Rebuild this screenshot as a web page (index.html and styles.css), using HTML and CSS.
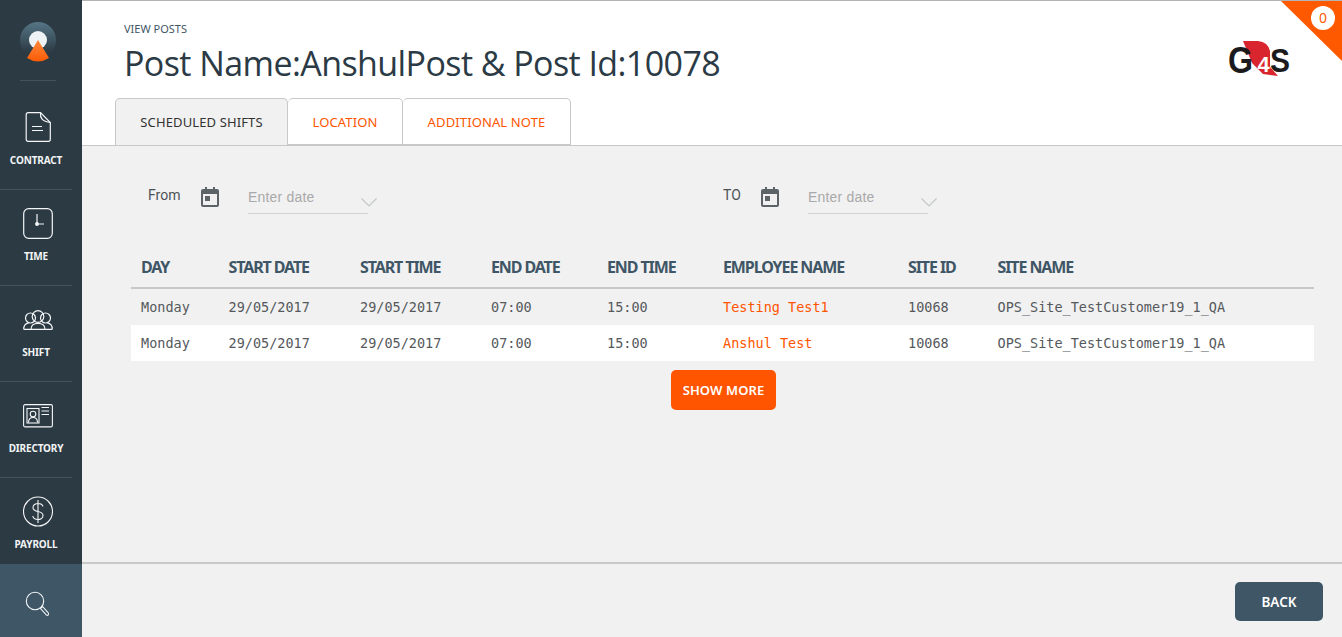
FILE: index.html
```html
<!DOCTYPE html>
<html lang="en">
<head>
<meta charset="utf-8">
<title>View Posts</title>
<link rel="stylesheet" href="styles.css">
</head>
<body>
<div class="app">
  <nav class="sidebar">
    <div class="brand">
      <svg class="brand-mark" width="36" height="42" viewBox="0 0 36 42">
        <defs>
          <linearGradient id="dome" x1="0" y1="0" x2="0" y2="1"><stop offset="0" stop-color="#557586"/><stop offset=".85" stop-color="#2c3a44"/></linearGradient>
          <linearGradient id="cone" x1="0" y1="0" x2="0" y2="1"><stop offset="0" stop-color="#ff8a3a"/><stop offset="1" stop-color="#fb5a05"/></linearGradient>
        </defs>
        <circle cx="18" cy="18" r="18" fill="url(#dome)"/>
        <circle cx="18" cy="18" r="9" fill="#eef2f5"/>
        <path d="M18 18 L29 36 Q18 43 7 36 Z" fill="url(#cone)"/>
      </svg>
    </div>
    <a class="nav-item nav-first">
      <svg width="26" height="30" viewBox="0 0 26 30" fill="none" stroke="#f4f6f7" stroke-width="1.2"><path d="M3 .7H15.5L25.3 10.5V27.5a1.8 1.8 0 0 1-1.8 1.8H3A1.8 1.8 0 0 1 1.2 27.5V2.5A1.8 1.8 0 0 1 3 .7Z"/><path d="M15.5 .7c-.5 5 1.500 9 9.800 9.800" /><path d="M7 14.500H17M7 18.500H18"/></svg>
      <span>CONTRACT</span>
    </a>
    <a class="nav-item">
      <svg width="30" height="31" viewBox="0 0 30 31" fill="none" stroke="#f4f6f7" stroke-width="1.2"><rect x=".7" y=".7" width="28.600" height="29.600" rx="5"/><path d="M14 6V16H21"/><circle cx="14" cy="16" r="1.300" fill="#f4f6f7"/></svg>
      <span>TIME</span>
    </a>
    <a class="nav-item">
      <svg width="30" height="20" viewBox="0 0 30 20" fill="none" stroke="#f4f6f7" stroke-width="1.200"><circle cx="15" cy="6.500" r="5.800"/><circle cx="7.500" cy="8" r="5"/><circle cx="22.500" cy="8" r="5"/><path d="M.7 19.300c0-4 2-6 5-6.500M29.300 19.300c0-4-2-6-5-6.500M8 19.300c0-4 3-6 7-6s7 2 7 6M.7 19.300H29.300"/></svg>
      <span>SHIFT</span>
    </a>
    <a class="nav-item">
      <svg width="30" height="24" viewBox="0 0 30 24" fill="none" stroke="#f4f6f7" stroke-width="1.100"><rect x=".6" y=".6" width="28.800" height="22.300" rx="1.500"/><rect x="4" y="4.500" width="12" height="14.500"/><circle cx="10" cy="10" r="2.800"/><path d="M5.500 18.500c0-3.500 2-5 4.500-5s4.500 1.500 4.500 5M18.500 3.500H26M18.500 7H26M18.500 10.500H26"/></svg>
      <span>DIRECTORY</span>
    </a>
    <a class="nav-item nav-last">
      <svg width="30" height="31" viewBox="0 0 30 31" fill="none" stroke="#f4f6f7" stroke-width="1.100"><circle cx="15" cy="15.500" r="14.500"/><path d="M20 10.500c-.5-2-2.500-3-5-3s-5 1.500-5 4 2.500 3.500 5 4 5 1.500 5 4-2.500 4-5 4-4.800-1.200-5.200-3.500M15 4V27"/></svg>
      <span>PAYROLL</span>
    </a>
    <a class="nav-search">
      <svg width="24" height="26" viewBox="0 0 24 26" fill="none" stroke="#f4f6f7" stroke-width="1.100"><circle cx="10" cy="10" r="8.700"/><path d="M15.500 17.500l2-2 5.800 6.300a1.400 1.400 0 0 1-2 2Z"/></svg>
    </a>
  </nav>

  <div class="main">
    <header class="header">
      <div class="head-row">
        <div class="head-titles">
          <div class="crumb">VIEW POSTS</div>
          <h1 class="title">Post Name:AnshulPost &amp; Post Id:10078</h1>
        </div>
        <svg class="g4s" width="66" height="46" viewBox="0 -4 66 46">
          <path d="M15 0H30Q40 1 42 10L42 26L50 35L35 33L24 22Z" fill="#d9252e"/>
          <text class="g4s-g" x="0" y="32" textLength="25" lengthAdjust="spacingAndGlyphs">G</text>
          <text class="g4s-four" x="29.500" y="31">4</text>
          <text class="g4s-s" x="42" y="31" textLength="20" lengthAdjust="spacingAndGlyphs">S</text>
        </svg>
      </div>
      <div class="tabs">
        <a class="tab tab-active">SCHEDULED SHIFTS</a>
        <a class="tab tab-loc">LOCATION</a>
        <a class="tab tab-note">ADDITIONAL NOTE</a>
      </div>
      <div class="corner"><span class="corner-count">0</span></div>
    </header>

    <section class="content">
      <div class="filters">
        <div class="filter filter-from">
          <span class="filter-label">From</span>
          <svg class="cal" width="18" height="20" viewBox="0 0 18 20"><path d="M4 0H6V2H12V0H14V2H16a2 2 0 0 1 2 2V18a2 2 0 0 1-2 2H2a2 2 0 0 1-2-2V4a2 2 0 0 1 2-2H4ZM2 7V18H16V7Z" fill="#5c6468"/><rect x="4" y="9" width="5" height="5" fill="#5c6468"/></svg>
          <div class="date-input">
            <span class="placeholder">Enter date</span>
            <svg class="chev" width="16" height="9" viewBox="0 0 16 9" fill="none" stroke="#c4c8ca" stroke-width="1.200"><path d="M.5 .5L8 8L15.500 .5"/></svg>
          </div>
        </div>
        <div class="filter filter-to">
          <span class="filter-label">TO</span>
          <svg class="cal" width="18" height="20" viewBox="0 0 18 20"><path d="M4 0H6V2H12V0H14V2H16a2 2 0 0 1 2 2V18a2 2 0 0 1-2 2H2a2 2 0 0 1-2-2V4a2 2 0 0 1 2-2H4ZM2 7V18H16V7Z" fill="#5c6468"/><rect x="4" y="9" width="5" height="5" fill="#5c6468"/></svg>
          <div class="date-input">
            <span class="placeholder">Enter date</span>
            <svg class="chev" width="16" height="9" viewBox="0 0 16 9" fill="none" stroke="#c4c8ca" stroke-width="1.200"><path d="M.5 .5L8 8L15.500 .5"/></svg>
          </div>
        </div>
      </div>

      <table class="shifts">
        <colgroup>
          <col class="c-day"><col class="c-sdate"><col class="c-stime"><col class="c-edate"><col class="c-etime"><col class="c-emp"><col class="c-site"><col>
        </colgroup>
        <thead>
          <tr><th>DAY</th><th>START DATE</th><th>START TIME</th><th>END DATE</th><th>END TIME</th><th>EMPLOYEE NAME</th><th>SITE ID</th><th>SITE NAME</th></tr>
        </thead>
        <tbody>
          <tr><td>Monday</td><td>29/05/2017</td><td>29/05/2017</td><td>07:00</td><td>15:00</td><td class="emp">Testing Test1</td><td>10068</td><td>OPS_Site_TestCustomer19_1_QA</td></tr>
          <tr class="alt"><td>Monday</td><td>29/05/2017</td><td>29/05/2017</td><td>07:00</td><td>15:00</td><td class="emp">Anshul Test</td><td>10068</td><td>OPS_Site_TestCustomer19_1_QA</td></tr>
        </tbody>
      </table>
      <div class="more-row"><button class="btn-more">SHOW MORE</button></div>
    </section>

    <footer class="footer"><button class="btn-back">BACK</button></footer>
  </div>
</div>
</body>
</html>
```
FILE: styles.css
```css
* { box-sizing: border-box; }
html, body { margin: 0; height: 100%; overflow: hidden; }
body { font-family: "Noto Sans", "Open Sans", sans-serif; background: #f1f1f1; color: #2b3a44; }
.app { display: flex; height: 637px; }

.sidebar { width: 82px; flex: none; background: #2c3a44; display: flex; flex-direction: column; }
.brand { height: 81px; margin: 0 26px 0 20px; border-bottom: 1px solid #46525b; padding-top: 22px; flex: none; }
.brand-mark { display: block; }
.nav-item { height: 96px; flex: none; margin-right: 10px; border-bottom: 1px solid #46525b; color: #f2f4f5; font: 700 10px/12px "Noto Sans", sans-serif; letter-spacing: -.15px; position: relative; }
.nav-item svg { position: absolute; top: 18px; left: 23px; }
.nav-item span { position: absolute; top: 60px; left: 0; width: 72px; text-align: center; }
.nav-first { height: 109px; }
.nav-first svg { top: 31px; left: 25px; }
.nav-first span { top: 73px; }
.nav-item:nth-child(4) svg { top: 24px; left: 23px; }
.nav-item:nth-child(5) svg { top: 22px; left: 23px; }
.nav-last { height: 86px; border-bottom: 0; }
.nav-search { height: 73px; flex: none; background: #3f5666; display: flex; align-items: center; justify-content: center; padding: 6px 8px 0 0; }

.main { flex: 1; min-width: 0; display: flex; flex-direction: column; }
.header { height: 146px; flex: none; background: #fff; border-top: 1px solid #b4b4b4; border-bottom: 1px solid #c8c8c8; position: relative; display: flex; flex-direction: column; overflow: hidden; }
.head-row { height: 97px; padding: 21px 48px 0 42px; flex: none; display: flex; justify-content: space-between; align-items: flex-start; }
.crumb { font-size: 11px; line-height: 14px; color: #3f5666; }
.title { margin: 4px 0 0; font: 400 34px/46px "Open Sans", sans-serif; letter-spacing: -.58px; color: #2b3a44; }
.g4s { margin-top: 15px; }
.g4s-g { font: 700 36px "Liberation Sans", sans-serif; fill: #1b1b1d; }
.g4s-s { font: 700 33px "Liberation Sans", sans-serif; fill: #1b1b1d; }
.g4s-four { font: 700 22px "Liberation Sans", sans-serif; fill: #fff; }

.tabs { display: flex; padding-left: 33px; height: 47px; flex: none; }
.tab { height: 47px; border: 1px solid #c8c8c8; border-left: 0; border-radius: 5px 5px 0 0; font-size: 13px; letter-spacing: .12px; line-height: 46px; color: #ff5500; background: #fff; white-space: nowrap; text-align: center; }
.tab-active { width: 173px; background: #f1f1f1; color: #333; border-left: 1px solid #c8c8c8; border-bottom: 0; }
.tab-loc { width: 115px; }
.tab-note { width: 168px; }

.corner { position: absolute; top: 0; right: 0; width: 61px; height: 60px; background: #ff5900; clip-path: polygon(0 0, 100% 0, 100% 100%); }
.corner-count { position: absolute; top: 5px; right: 7px; width: 24px; height: 24px; border-radius: 50%; background: #fff; color: #ff5900; font-size: 14px; line-height: 24px; text-align: center; }

.content { flex: 1; min-height: 0; padding: 0 28px 0 49px; }
.filters { display: flex; height: 101px; padding: 40px 0 0 17px; }
.filter { display: flex; align-items: flex-start; position: relative; }
.filter-from { width: 575px; }
.filter-label { font: 400 14px/18px Roboto, sans-serif; color: #4c5357; }
.filter-from .filter-label { width: 53px; }
.filter-to .filter-label { width: 38px; }
.cal { margin-right: 29px; margin-top: 1px; flex: none; }
.date-input { width: 120px; height: 28px; border-bottom: 1px solid #d2d2d2; position: relative; padding-top: 1px; }
.placeholder { display: block; font: 400 14px/20px "Liberation Sans", sans-serif; letter-spacing: .2px; color: #a9a9a9; }
.chev { position: absolute; right: -9px; top: 12px; }

.shifts { width: 1183px; border-collapse: separate; border-spacing: 0; table-layout: fixed; font: 400 13.500px/18px "DejaVu Sans Mono", monospace; color: #55595c; }
.c-day { width: 87.500px; }
.c-sdate { width: 131.500px; }
.c-stime { width: 131px; }
.c-edate { width: 116px; }
.c-etime { width: 116px; }
.c-emp { width: 185px; }
.c-site { width: 89.500px; }
.shifts th { height: 42px; padding: 0 0 1px 10px; text-align: left; font: 700 16px/20px "Noto Sans", sans-serif; letter-spacing: -1.100px; color: #3f5666; border-bottom: 2px solid #c8c8c8; white-space: nowrap; }
.shifts td { height: 36px; padding: 0 0 0 10px; white-space: nowrap; }
.shifts .alt td { background: #fff; }
.shifts td.emp { color: #ff5500; }
.more-row { display: flex; justify-content: center; padding: 9px 0 0 2px; }
.btn-more { width: 105px; height: 40px; border: 0; border-radius: 5px; background: #ff5500; color: #fff; font: 600 13px "Noto Sans", sans-serif; letter-spacing: .1px; padding: 0; }

.footer { height: 75px; flex: none; border-top: 2px solid #c9c9c9; display: flex; justify-content: flex-end; padding: 18px 19px 0 0; }
.btn-back { width: 88px; height: 39px; border: 0; border-radius: 5px; background: #3f5666; color: #fff; font: 600 13.500px "Noto Sans", sans-serif; padding: 0; }
```
